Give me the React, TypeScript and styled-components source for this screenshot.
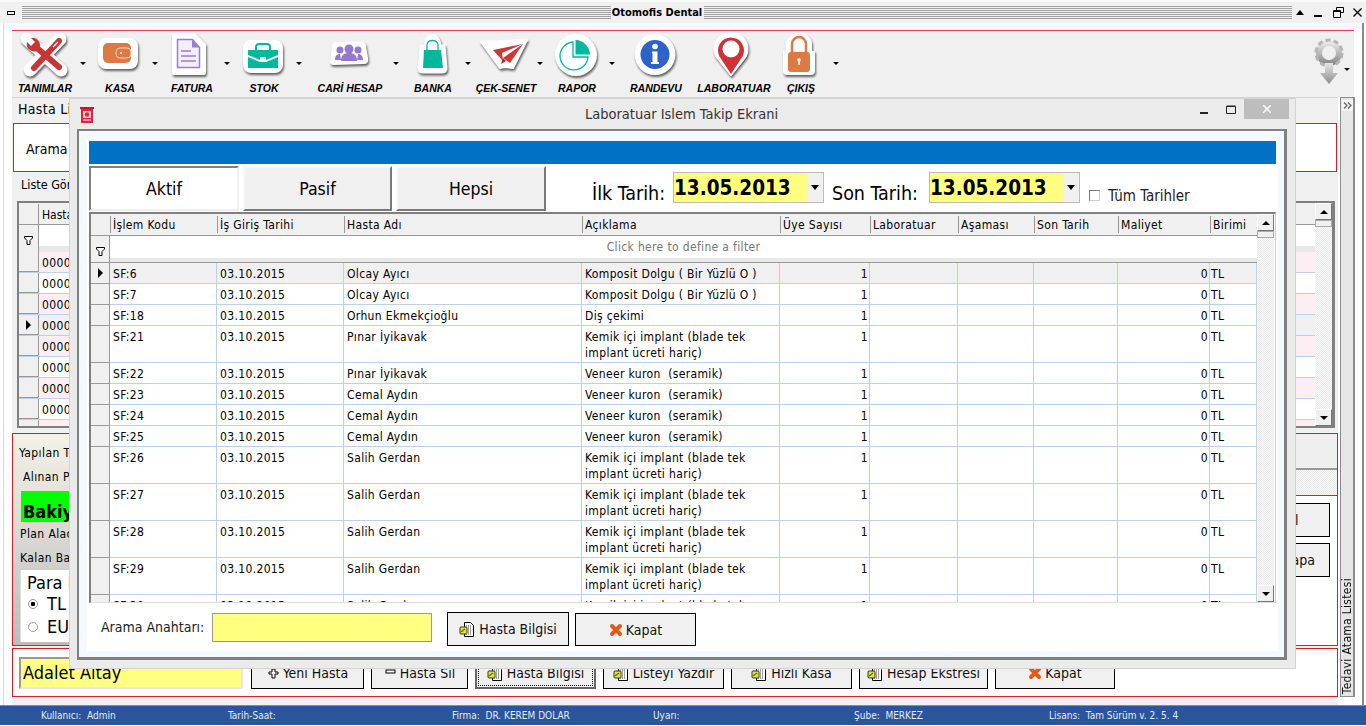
import React from 'react'
import styled, { createGlobalStyle } from 'styled-components'

const GlobalStyle = createGlobalStyle`
  html, body {
    margin: 0;
    padding: 0;
    background: #fff;
    overflow: hidden;
  }
  * {
    box-sizing: border-box;
  }
  body {
    font-family: "DejaVu Sans", "Noto Sans", sans-serif;
    font-stretch: condensed;
    font-size: 12px;
    color: #000;
  }
`

const GRID_COLS = '19px 107px 127px 238px 198px 90px 88px 76px 84px 92px 47px'
const CELL_LINE = '#b9d1ea'
const DITHER = 'repeating-conic-gradient(#e9e9e9 0% 25%, #fbfbfb 0% 50%) 0 0 / 2px 2px'

const Page = styled.div`
  position: relative;
  width: 1366px;
  height: 726px;
  display: flex;
  flex-direction: column;
  overflow: hidden;
  background: #fff;
`

/* ---------- app title bar ---------- */

const TitleBar = styled.div`
  height: 23px;
  display: flex;
  align-items: center;
  padding: 0 4px 0 7px;
  background: #f0f0f0;
  border-top: 2px solid #fafafa;
`

const SysMinimize = styled.div`
  width: 8px;
  height: 4px;
  border: 1px solid #000;
  margin-right: 7px;
`

const Grip = styled.div`
  flex: 1;
  height: 13px;
  background: repeating-linear-gradient(#a3a3a3 0 1px, #f0f0f0 1px 2px);
`

const AppTitle = styled.div`
  width: 93px;
  text-align: center;
  font-weight: 700;
  font-size: 11px;
`

const WinButtons = styled.div`
  width: 70px;
  display: flex;
  align-items: center;
  justify-content: space-between;
  padding-left: 4px;
`

/* ---------- main window ---------- */

const Shell = styled.div`
  height: 682px;
  width: 1361px;
  margin-left: 3px;
  padding: 7px 0 0 8px;
  border-left: 1px solid #d8d8d8;
  border-right: 2px solid #8a8a8a;
  background: linear-gradient(#f5f9ff 0 7px, #fff 7px);
`

const Ribbon = styled.div`
  width: 1342px;
  height: 67px;
  display: flex;
  background: #f0f0f0;
  border-top: 1px solid #ee3a5e;
`

const RibbonItem = styled.div<{ $w: number }>`
  width: ${p => p.$w}px;
  display: flex;
  flex-direction: column;
  align-items: center;
`

const RibbonIcon = styled.svg`
  width: 50px;
  height: 50px;
  flex: none;
  overflow: visible;
  filter: drop-shadow(1.5px 2px 1px rgba(0, 0, 0, 0.6));
`

const RibbonLabel = styled.div`
  height: 14px;
  white-space: nowrap;
  font-family: "Liberation Sans", Arial, sans-serif;
  font-stretch: normal;
  font-weight: 700;
  font-style: italic;
  font-size: 10.5px;
  line-height: 14px;
`

const RibbonCaret = styled.div<{ $shift: number }>`
  width: 10px;
  flex: none;
  margin-left: ${p => p.$shift}px;
  padding: 31px 0 0 2px;
  &::before {
    content: '';
    display: block;
    width: 0;
    height: 0;
    border: 3px solid transparent;
    border-top: 3px solid #000;
    border-bottom: 0;
  }
`

const GearSlot = styled.div`
  margin-left: auto;
  display: flex;
  padding: 6px 2px 0 0;
`

const GearIcon = styled.svg`
  width: 32px;
  height: 50px;
`

const Workspace = styled.div`
  display: flex;
  height: 608px;
  gap: 2px;
`

const MainColumn = styled.div`
  width: 1326px;
  height: 100%;
  display: flex;
  flex-direction: column;
  background: #f0f0f0;
`

const Strip = styled.div`
  width: 15px;
  height: 600px;
  border: 1px solid #8c8c8c;
  border-right-width: 2px;
  background: #e6e6e6;
  display: flex;
  flex-direction: column;
  justify-content: space-between;
  align-items: center;
`

const StripToggle = styled.div`
  width: 11px;
  height: 11px;
  margin-top: 2px;
  display: flex;
  align-items: center;
  justify-content: center;
  background: #f4f4f4;
`

const StripText = styled.div`
  writing-mode: vertical-rl;
  transform: rotate(180deg);
  font-size: 12px;
  letter-spacing: 0.3px;
  line-height: 12px;
  margin-bottom: 2px;
  white-space: nowrap;
  color: #111;
`

const TabTitle = styled.div`
  height: 26px;
  padding: 1px 0 0 6px;
  font-size: 14px;
  letter-spacing: 0.3px;
  line-height: 20px;
  border-top: 1px solid #d4d4d4;
`

const SearchBox = styled.div`
  height: 49px;
  margin-left: 1px;
  width: 1324px;
  border: 1px solid #e21c1c;
  background: #fff;
  padding-left: 12px;
  font-size: 14px;
  line-height: 50px;
`

const ListPanel = styled.div`
  height: 261px;
  padding-left: 5px;
`

const ListCaption = styled.div`
  height: 29px;
  padding: 5px 0 0 4px;
  font-size: 12.5px;
  line-height: 16px;
`

const ListGrid = styled.div`
  width: 1318px;
  height: 227px;
  display: flex;
  border: 2px solid #808080;
  border-right-width: 3px;
  background: #fff;
  overflow: hidden;
`

const ListBody = styled.div`
  flex: 1;
  overflow: hidden;
`

const ListHead = styled.div`
  height: 22px;
  display: flex;
  background: #f0f0f0;
  border-bottom: 1px solid #999;
  padding: 1px 0 0 19px;
  line-height: 22px;
  span {
    padding-left: 3px;
    border-left: 1px solid #999;
  }
`

const ListFilter = styled.div`
  height: 27px;
  display: flex;
  background: linear-gradient(#fff 0 21px, #e8e8e8 21px);
`

const ListRow = styled.div<{ $tone: 'pink' | 'white' | 'gray' }>`
  height: 21px;
  display: flex;
  line-height: 22px;
  border-bottom: 1px solid ${CELL_LINE};
  background: ${p => (p.$tone === 'pink' ? '#fdeef4' : p.$tone === 'gray' ? '#f0f0f0' : '#fff')};
`

const Indicator = styled.div<{ $w?: number; $open?: boolean }>`
  width: ${p => p.$w ?? 20}px;
  flex: none;
  display: flex;
  align-items: center;
  justify-content: center;
  background: #f0f0f0;
  border-right: 1px solid #999;
  ${p => (p.$open ? 'padding-top: 4px;' : 'border-bottom: 1px solid #999;')}
`

const RowMark = styled.div`
  width: 0;
  height: 0;
  border-left: 5px solid #000;
  border-top: 5px solid transparent;
  border-bottom: 5px solid transparent;
`

const ListCode = styled.div`
  padding-left: 3px;
  letter-spacing: 0.35px;
`

const Scrollbar = styled.div<{ $w: number }>`
  width: ${p => p.$w}px;
  flex: none;
  display: flex;
  flex-direction: column;
  background: ${DITHER};
`

const ScrollButton = styled.div<{ $down?: boolean }>`
  height: 17px;
  display: flex;
  align-items: center;
  justify-content: center;
  background: #f0f0f0;
  border: 1px solid #fff;
  border-right: 1px solid #777;
  border-bottom: 1px solid #777;
  ${p => p.$down && 'margin-top: auto;'}
  &::before {
    content: '';
    width: 0;
    height: 0;
    border-left: 4px solid transparent;
    border-right: 4px solid transparent;
    ${p => (p.$down ? 'border-top: 4px solid #000;' : 'border-bottom: 4px solid #000;')}
  }
`

const ScrollThumb = styled.div`
  height: 7px;
  background: #f0f0f0;
  border: 1px solid #aaa;
`

/* ---------- lower panels of the main window ---------- */

const LowerPanel = styled.div`
  height: 213px;
  width: 1326px;
  display: flex;
  justify-content: space-between;
  border: 1px solid #e21c1c;
  background: #f0f0f0;
`

const Summary = styled.div`
  width: 300px;
  padding: 7px 0 0 6px;
  background: linear-gradient(#f4f2e6, #bcbcbc);
`

const SummaryLine = styled.div<{ $indent?: number }>`
  height: 24px;
  padding-left: ${p => p.$indent ?? 0}px;
  font-size: 12px;
  letter-spacing: 0.4px;
  line-height: 25px;
  white-space: nowrap;
`

const BalanceBox = styled.div`
  width: 48px;
  height: 31px;
  margin: 2px 0 0 2px;
  overflow: hidden;
  background: #00ff00;
  font-size: 18px;
  font-weight: 700;
  line-height: 41px;
  padding-left: 2px;
`

const CurrencyGroup = styled.div`
  width: 300px;
  height: 72px;
  margin-left: 1px;
  padding: 3px 0 0 6px;
  background: #fff;
  font-size: 18px;
  border-left: 1px solid #ddd;
`

const CurrencyTitle = styled.div`
  height: 19px;
  line-height: 19px;
`

const CurrencyLine = styled.div`
  height: 23px;
  display: flex;
  align-items: center;
  gap: 9px;
  padding-left: 1px;
  line-height: 23px;
`

const Radio = styled.div<{ $on?: boolean }>`
  width: 10px;
  height: 10px;
  border-radius: 50%;
  border: 1px solid #999;
  background: ${p => (p.$on ? 'radial-gradient(#000 0 2px, #fff 2.5px)' : '#fff')};
`

const SidePane = styled.div`
  width: 300px;
  display: flex;
  flex-direction: column;
`

const SideHead = styled.div`
  height: 36px;
  background: #efefef;
  border-bottom: 2px solid #999;
`

const SideTexture = styled.div`
  height: 25px;
  background: ${DITHER};
`

const SideBox = styled.div`
  flex: 1;
  background: #fff;
  border-top: 1px solid #e21c1c;
  padding: 7px 7px 0 0;
  display: flex;
  flex-direction: column;
  align-items: flex-end;
  gap: 6px;
`

const PlainButton = styled.button<{ $w: number; $h?: number; $top?: number; $focused?: boolean }>`
  width: ${p => p.$w}px;
  height: ${p => p.$h ?? 34}px;
  margin-top: ${p => p.$top ?? 0}px;
  flex: none;
  display: flex;
  align-items: center;
  justify-content: center;
  gap: 3px;
  padding: 0;
  font: inherit;
  font-size: 14px;
  color: #111;
  background: #f0f0f0;
  border: ${p => (p.$focused ? '2px solid #666' : '1px solid #000')};
  ${p => p.$focused && 'outline: 1px dotted #000; outline-offset: -4px;'}
`

const BottomBox = styled.div`
  height: 49px;
  width: 1326px;
  margin-top: 2px;
  display: flex;
  align-items: flex-start;
  padding: 8px 0 0 6px;
  gap: 7px;
  border: 1px solid #e21c1c;
  background: #fff;
`

const NameField = styled.div`
  width: 224px;
  height: 32px;
  margin-right: 1px;
  padding-left: 2px;
  background: #ffff80;
  border: 2px solid #e8e8e8;
  border-top-color: #999;
  border-left-color: #999;
  font-size: 18px;
  line-height: 27px;
`

const StatusBar = styled.div`
  height: 20px;
  display: flex;
  align-items: center;
  padding-left: 41px;
  background: #2a559b;
  color: #e4ebf6;
  font-size: 10px;
  border-top: 1px solid #8b8b8b;
`

const StatusItem = styled.div<{ $w: number }>`
  width: ${p => p.$w}px;
  white-space: pre;
`

/* ---------- dialog window ---------- */

const Dialog = styled.div`
  position: absolute;
  left: 69px;
  top: 98px;
  width: 1227px;
  height: 571px;
  display: flex;
  flex-direction: column;
  background: #ebebeb;
  border: 1px solid #d4d4d4;
`

const DialogBar = styled.div`
  height: 30px;
  flex: none;
  position: relative;
  display: flex;
  align-items: center;
  padding-left: 10px;
`

const DialogTitle = styled.div`
  flex: 1;
  text-align: center;
  font-size: 14.5px;
  color: #333;
  padding-right: 26px;
  line-height: 30px;
`

const DialogControls = styled.div`
  position: absolute;
  top: 0;
  right: 6px;
  height: 20px;
  display: flex;
  align-items: stretch;
`

const DialogControl = styled.div<{ $w: number; $close?: boolean }>`
  width: ${p => p.$w}px;
  display: flex;
  align-items: center;
  justify-content: center;
  background: ${p => (p.$close ? '#bdbdbd' : 'transparent')};
`

const ClientFrame = styled.div`
  margin: 0 8px 8px 7px;
  height: 532px;
  border: 3px solid #808080;
  border-top-width: 2px;
  border-left-width: 2px;
  padding: 10px 6px 6px 8px;
  background: #f4f8ff;
`

const ClientBody = styled.div`
  height: 100%;
  display: flex;
  flex-direction: column;
  padding-left: 2px;
  background: #fff;
`

const BlueBar = styled.div`
  width: 1187px;
  height: 23px;
  flex: none;
  background: #0071c4;
`

const FilterRow = styled.div`
  height: 48px;
  flex: none;
  display: flex;
  align-items: flex-start;
  padding-top: 2px;
`

const StateTab = styled.div<{ $active?: boolean; $w: number }>`
  width: ${p => p.$w}px;
  height: 45px;
  margin-right: 4px;
  text-align: center;
  font-size: 17.5px;
  line-height: 43px;
  background: ${p => (p.$active ? '#fff' : '#f0f0f0')};
  border: 2px solid;
  border-color: ${p =>
    p.$active ? '#808080 #efefef #efefef #808080' : '#f8f8f8 #7a7a7a #7a7a7a #f8f8f8'};
`

const DateLabel = styled.div<{ $left: number; $w: number }>`
  margin: 15px 0 0 ${p => p.$left}px;
  width: ${p => p.$w}px;
  white-space: nowrap;
  font-size: 19.5px;
  line-height: 26px;
`

const DateCombo = styled.div`
  width: 151px;
  height: 31px;
  margin-top: 6px;
  display: flex;
  background: #ffff80;
  border: 1px solid #bbb;
  font-size: 20.5px;
  font-weight: 700;
  line-height: 31px;
`

const DateText = styled.div`
  flex: 1;
`

const ComboDrop = styled.div`
  width: 16px;
  display: flex;
  align-items: center;
  justify-content: center;
  background: #f0f0f0;
  &::before {
    content: '';
    width: 0;
    height: 0;
    border-left: 4px solid transparent;
    border-right: 4px solid transparent;
    border-top: 5px solid #000;
  }
`

const CheckBox = styled.div`
  width: 11px;
  height: 11px;
  margin: 24px 0 0 9px;
  background: #fff;
  border: 1px solid #777;
  border-right-color: #ccc;
  border-bottom-color: #ccc;
`

const CheckLabel = styled.div`
  margin: 21px 0 0 8px;
  font-size: 15px;
  line-height: 18px;
  color: #222;
`

const Grid = styled.div`
  width: 1187px;
  height: 391px;
  flex: none;
  display: flex;
  border-top: 2px solid #808080;
  border-left: 2px solid #808080;
  border-right: 1px solid #ccc;
  border-bottom: 1px solid #ddd;
  overflow: hidden;
  letter-spacing: 0.35px;
`

const GridBody = styled.div`
  width: 1166px;
  flex: none;
`

const HeadRow = styled.div`
  height: 22px;
  display: grid;
  grid-template-columns: ${GRID_COLS};
  background: #f0f0f0;
  border-bottom: 1px solid #999;
`

const HeadCell = styled.div`
  padding-left: 2px;
  border-left: 1px solid #999;
  margin: 2px 0;
  line-height: 18px;
  white-space: nowrap;
  overflow: hidden;
`

const FilterGridRow = styled.div`
  height: 27px;
  display: flex;
  background: linear-gradient(#fff 0 22px, #e9e9e9 22px);
  border-bottom: 1px solid #999;
`

const FilterHint = styled.div`
  flex: 1;
  text-align: center;
  color: #777;
  line-height: 22px;
`

const DataRow = styled.div<{ $tall?: boolean; $current?: boolean }>`
  height: ${p => (p.$tall ? 37 : 21)}px;
  display: grid;
  grid-template-columns: ${GRID_COLS};
  background: ${p => (p.$current ? '#f0f0f0' : '#fff')};
`

const DataCell = styled.div<{ $right?: boolean; $pad?: number }>`
  padding: 3px 1px 0 ${p => p.$pad ?? 3}px;
  line-height: 16px;
  white-space: pre-wrap;
  overflow: hidden;
  border-right: 1px solid ${CELL_LINE};
  border-bottom: 1px solid ${CELL_LINE};
  ${p => p.$right && 'text-align: right;'}
`

const SearchRow = styled.div`
  flex: 1;
  display: flex;
  align-items: flex-start;
  padding: 9px 0 0 12px;
`

const SearchLabel = styled.div`
  width: 111px;
  margin-top: 5px;
  font-size: 14px;
  line-height: 20px;
  color: #222;
`

const SearchField = styled.div`
  width: 220px;
  height: 29px;
  margin: 1px 15px 0 0;
  background: #ffff80;
  border: 1px solid #999;
`

const KapatGap = styled.div`
  width: 6px;
  flex: none;
`

/* ---------- drawings ---------- */

const DocGlyph = () => (
  <svg width="17" height="17" viewBox="0 0 17 17">
    <path d="M5.500 1.500h6l3 3v11h-9z" fill="#fff" stroke="#000" />
    <path d="M7 5h5M7 7h6M7 9h6M7 11h6M7 13h6" stroke="#444" strokeDasharray="1 1" />
    <rect x="1" y="6" width="7" height="7" rx="1" fill="#f3e21e" stroke="#333" />
    <path d="M2 11l4-3" stroke="#0a8a8a" strokeWidth="1.500" />
  </svg>
)

const CloseGlyph = () => (
  <svg width="14" height="14" viewBox="0 0 14 14">
    <path d="M3 3l8 8M11 3l-8 8" stroke="#e2591c" strokeWidth="4" strokeLinecap="round" />
  </svg>
)

const PlusGlyph = () => (
  <svg width="13" height="11" viewBox="0 0 13 11">
    <path d="M5 1h3v3h3v2H8v4H5V6H2V4h3z" fill="#fff" stroke="#000" />
  </svg>
)

const MinusGlyph = () => (
  <svg width="13" height="11" viewBox="0 0 13 11">
    <rect x="2" y="2" width="9" height="3" fill="#fff" stroke="#000" />
  </svg>
)

const Funnel = () => (
  <svg width="9" height="9" viewBox="0 0 9 9">
    <path d="M.5.5h8v1.500L6 4.500v4H3v-4L.5 2z" fill="#fff" stroke="#000" />
  </svg>
)

const DialogGlyph = () => (
  <svg width="14" height="17" viewBox="0 0 14 17">
    <path d="M1 3h12v14H1z" fill="#e0243c" />
    <path d="M0 1h14v2H0z" fill="#c01830" />
    <rect x="3" y="5" width="8" height="7" fill="#f8c8d0" />
    <circle cx="7" cy="8.500" r="2.200" fill="#e0243c" />
    <path d="M3 14h8" stroke="#fff" />
  </svg>
)

const WHITE = '#fff'

const icons: Record<string, React.ReactNode> = {
  tanimlar: (
    <>
      <path d="M6 6L40 37M39 6L9 37" stroke={WHITE} strokeWidth="13" strokeLinecap="round" />
      <path d="M38 8L13 35" stroke="#c93434" strokeWidth="6" strokeLinecap="round" />
      <path d="M16 15L38 34" stroke="#c93434" strokeWidth="6" strokeLinecap="round" />
      <path d="M6 9a7.500 7.500 0 0 0 10 9l3-5a7.500 7.500 0 0 0-9-8l4 4-4 4z" fill="#c93434" />
      <path d="M37 9l-5 5" stroke={WHITE} strokeWidth="1.200" />
    </>
  ),
  kasa: (
    <>
      <rect x="2" y="5" width="40" height="31" rx="8" fill={WHITE} />
      <rect x="7" y="10" width="28" height="20" rx="5" fill="#dc7b41" />
      <rect x="20" y="15" width="15" height="10" rx="4" fill="none" stroke="#f5d2bb" />
      <circle cx="25" cy="20" r="1" fill="#fff" />
    </>
  ),
  fatura: (
    <>
      <path d="M6 2h20l10 10v28H6z" fill={WHITE} stroke={WHITE} strokeWidth="4" strokeLinejoin="round" />
      <path d="M9.500 6.500h15l7 8v20h-22z" fill="#f2eefa" stroke="#9a7fd1" strokeWidth="1.500" />
      <path d="M24 6.500v8h7.500" fill="#9a7fd1" />
      <path d="M13 18h10M13 23h15M13 28h15" stroke="#9a7fd1" strokeWidth="1.500" />
    </>
  ),
  stok: (
    <>
      <rect x="3" y="7" width="40" height="33" rx="8" fill={WHITE} />
      <path d="M16 17v-3a3 3 0 0 1 3-3h8a3 3 0 0 1 3 3v3" fill="none" stroke="#00b89c" strokeWidth="2" />
      <path d="M8 17h30v5L26 27h-6L8 22z" fill="#00b89c" />
      <path d="M8 24l12 5h6l12-5v11H8z" fill="#00b89c" />
      <rect x="20" y="24" width="6" height="3" fill="#fff" />
    </>
  ),
  cari: (
    <>
      <path d="M6 12q1-3 5-3h24q5 0 5 4l2 12q1 6-4 6l-30 1q-4 0-4-3z" fill={WHITE} />
      <circle cx="23" cy="16" r="4.500" fill="#9478cf" />
      <path d="M15 28c0-6 3-8 8-8s8 2 8 8z" fill="#9478cf" />
      <circle cx="14" cy="17" r="3.500" fill="#9478cf" />
      <circle cx="32" cy="17" r="3.500" fill="#9478cf" />
      <path d="M9 27c0-4 2-6 5-6l1 6zM37 27c0-4-2-6-5-6l-1 6z" fill="#9478cf" />
    </>
  ),
  banka: (
    <>
      <path d="M12 13h23l2 22q0 4-4 4H14q-4 0-4-4z" fill={WHITE} stroke={WHITE} strokeWidth="3" />
      <path d="M17 13c0-12 13-12 13 0v3H17z" fill={WHITE} stroke={WHITE} strokeWidth="5" />
      <path d="M15 17h17l2 18H14z" fill="#00b89c" />
      <path d="M18 21v-9c0-6 11-6 11 0v9" fill="none" stroke="#00b89c" strokeWidth="1.300" />
    </>
  ),
  cek: (
    <>
      <path d="M-1 9l46-2-14 28-8-1-5 1-6-8z" fill={WHITE} stroke={WHITE} strokeWidth="2" strokeLinejoin="round" />
      <path d="M11 17l30-6-21 9 1 8z" fill="#cf3636" />
      <path d="M41 11L28 30l-7-5z" fill="#cf3636" />
      <path d="M21 25l-2 6 5-3z" fill="#a92828" />
    </>
  ),
  rapor: (
    <>
      <circle cx="23" cy="22" r="21" fill={WHITE} />
      <path d="M20 9a14 14 0 1 0 15 15H20z" fill="none" stroke="#00b89c" strokeWidth="1.300" />
      <path d="M22.500 7a15 15 0 0 1 14.500 14.500H22.500z" fill="#00b89c" />
    </>
  ),
  randevu: (
    <>
      <circle cx="23" cy="21.500" r="20.500" fill={WHITE} />
      <circle cx="23" cy="21.500" r="14.500" fill="#2f62c9" />
      <circle cx="23" cy="13.500" r="2.800" fill="#fff" />
      <path d="M20 18.500h5.500V29H27v2h-8v-2h1.500v-8.500H20z" fill="#fff" />
    </>
  ),
  lab: (
    <>
      <path d="M21 43L6 24a17 17 0 1 1 30 0z" fill={WHITE} stroke={WHITE} strokeWidth="1" />
      <path d="M21 41L9.500 23.500a13 13 0 1 1 23 0z" fill="#cb3434" />
      <circle cx="21" cy="16" r="8.500" fill="#fff" />
    </>
  ),
  cikis: (
    <>
      <path d="M9 18v-7a13 11 0 0 1 26 0v7h3v20q0 4-4 4H10q-4 0-4-4V18z" fill={WHITE} />
      <path d="M15 20v-9a7 7 0 0 1 14 0v9" fill="none" stroke="#dc7b41" strokeWidth="2.500" />
      <rect x="11" y="19" width="22" height="20" rx="3" fill="#dc7b41" />
      <circle cx="22" cy="27" r="1.800" fill="#fff" />
      <rect x="21.300" y="27" width="1.500" height="5" fill="#fff" />
    </>
  ),
}

const ribbon = [
  { key: 'tanimlar', label: 'TANIMLAR', w: 66, shift: 0 },
  { key: 'kasa', label: 'KASA', w: 64, shift: -2 },
  { key: 'fatura', label: 'FATURA', w: 64, shift: -2 },
  { key: 'stok', label: 'STOK', w: 64, shift: -2 },
  { key: 'cari', label: 'CARİ HESAP', w: 92, shift: -5 },
  { key: 'banka', label: 'BANKA', w: 64, shift: -2 },
  { key: 'cek', label: 'ÇEK-SENET', w: 66, shift: -4 },
  { key: 'rapor', label: 'RAPOR', w: 64, shift: -2 },
  { key: 'randevu', label: 'RANDEVU', w: 78 },
  { key: 'lab', label: 'LABORATUAR', w: 78 },
  { key: 'cikis', label: 'ÇIKIŞ', w: 56, shift: 2 },
]

const headers = [
  'İşlem Kodu',
  'İş Giriş Tarihi',
  'Hasta Adı',
  'Açıklama',
  'Üye Sayısı',
  'Laboratuar',
  'Aşaması',
  'Son Tarih',
  'Maliyet',
  'Birimi',
]

const IMPLANT = 'Kemik içi implant (blade tek\nimplant ücreti hariç)'
const VENEER = 'Veneer kuron  (seramik)'
const DOLGU = 'Komposit Dolgu ( Bir Yüzlü O )'

const rows = [
  { code: 'SF:6', name: 'Olcay Ayıcı', note: DOLGU },
  { code: 'SF:7', name: 'Olcay Ayıcı', note: DOLGU },
  { code: 'SF:18', name: 'Orhun Ekmekçioğlu', note: 'Diş çekimi' },
  { code: 'SF:21', name: 'Pınar İyikavak', note: IMPLANT },
  { code: 'SF:22', name: 'Pınar İyikavak', note: VENEER },
  { code: 'SF:23', name: 'Cemal Aydın', note: VENEER },
  { code: 'SF:24', name: 'Cemal Aydın', note: VENEER },
  { code: 'SF:25', name: 'Cemal Aydın', note: VENEER },
  { code: 'SF:26', name: 'Salih Gerdan', note: IMPLANT },
  { code: 'SF:27', name: 'Salih Gerdan', note: IMPLANT },
  { code: 'SF:28', name: 'Salih Gerdan', note: IMPLANT },
  { code: 'SF:29', name: 'Salih Gerdan', note: IMPLANT },
  { code: 'SF:30', name: 'Salih Gerdan', note: IMPLANT },
]

const listRows = Array.from({ length: 9 }, (_, i) => i)

const bottomButtons = [
  { label: 'Hasta Sil', w: 97, glyph: <MinusGlyph /> },
  { label: 'Hasta Bilgisi', w: 121, glyph: <DocGlyph />, focused: true },
  { label: 'Listeyi Yazdır', w: 121, glyph: <DocGlyph /> },
  { label: 'Hızlı Kasa', w: 121, glyph: <DocGlyph /> },
  { label: 'Hesap Ekstresi', w: 129, glyph: <DocGlyph /> },
  { label: 'Kapat', w: 120, glyph: <CloseGlyph /> },
]

export default function App() {
  return (
    <Page>
      <GlobalStyle />
      <TitleBar>
        <SysMinimize />
        <Grip />
        <AppTitle>Otomofis Dental</AppTitle>
        <Grip />
        <WinButtons>
          <svg width="9" height="6" viewBox="0 0 9 6"><path d="M0 5h8L4 0z" /></svg>
          <svg width="9" height="10" viewBox="0 0 9 10"><path d="M0 7h8v2H0z" /></svg>
          <svg width="11" height="11" viewBox="0 0 11 11" fill="none" stroke="#000">
            <path d="M3.500 3V.5h7v5H8M.5 3.500h7v7h-7zM.5 4.500h7" />
          </svg>
          <svg width="9" height="9" viewBox="0 0 9 9" stroke="#000" strokeWidth="1.300"><path d="M.5.5l8 8M8.500.5l-8 8" /></svg>
        </WinButtons>
      </TitleBar>

      <Shell>
        <Ribbon>
          {ribbon.map(item => (
            <React.Fragment key={item.key}>
              <RibbonItem $w={item.w}>
                <RibbonIcon viewBox="-1 -2 50 50">{icons[item.key]}</RibbonIcon>
                <RibbonLabel>{item.label}</RibbonLabel>
              </RibbonItem>
              {item.shift !== undefined && <RibbonCaret $shift={item.shift} />}
            </React.Fragment>
          ))}
          <GearSlot>
            <GearIcon viewBox="0 0 32 50">
              <defs>
                <linearGradient id="gearFill" x1="0" y1="0" x2="0" y2="1">
                  <stop offset="0" stopColor="#e6e6e6" />
                  <stop offset="1" stopColor="#8c8c8c" />
                </linearGradient>
              </defs>
              <circle cx="15" cy="16" r="10" fill="none" stroke="url(#gearFill)" strokeWidth="6" />
              <circle cx="15" cy="16" r="13" fill="none" stroke="#b5b5b5" strokeWidth="3" strokeDasharray="5 3.200" />
              <path d="M11 26h8v10h5l-9 11-9-11h5z" fill="url(#gearFill)" />
            </GearIcon>
            <RibbonCaret $shift={-4} />
          </GearSlot>
        </Ribbon>

        <Workspace>
          <MainColumn>
            <TabTitle>Hasta Listesi</TabTitle>
            <SearchBox>Arama Anahtarı</SearchBox>
            <ListPanel>
              <ListCaption>Liste Görünümü</ListCaption>
              <ListGrid>
                <ListBody>
                  <ListHead>
                    <span>Hasta Kodu</span>
                  </ListHead>
                  <ListFilter>
                    <Indicator $open><Funnel /></Indicator>
                  </ListFilter>
                  {listRows.map(i => (
                    <ListRow key={i} $tone={i === 3 ? 'gray' : i % 2 === 0 ? 'pink' : 'white'}>
                      <Indicator>{i === 3 && <RowMark />}</Indicator>
                      <ListCode>{`00000${i + 1}`}</ListCode>
                    </ListRow>
                  ))}
                </ListBody>
                <Scrollbar $w={17}>
                  <ScrollButton />
                  <ScrollThumb />
                  <ScrollButton $down />
                </Scrollbar>
              </ListGrid>
            </ListPanel>
            <LowerPanel>
              <Summary>
                <SummaryLine>Yapılan Tedavi</SummaryLine>
                <SummaryLine $indent={4}>Alınan Para</SummaryLine>
                <BalanceBox>Bakiye</BalanceBox>
                <SummaryLine $indent={1}>Plan Alacak</SummaryLine>
                <SummaryLine $indent={1}>Kalan Bakiye</SummaryLine>
                <CurrencyGroup>
                  <CurrencyTitle>Para Birimi</CurrencyTitle>
                  <CurrencyLine><Radio $on />TL</CurrencyLine>
                  <CurrencyLine><Radio />EURO</CurrencyLine>
                </CurrencyGroup>
              </Summary>
              <SidePane>
                <SideHead />
                <SideTexture />
                <SideBox>
                  <PlainButton $w={120}>Detay Bil</PlainButton>
                  <PlainButton $w={120}>Hesabını Kapa</PlainButton>
                </SideBox>
              </SidePane>
            </LowerPanel>
            <BottomBox>
              <NameField>Adalet Altay</NameField>
              <PlainButton $w={113} $h={32}><PlusGlyph /> Yeni Hasta</PlainButton>
              {bottomButtons.map(b => (
                <PlainButton key={b.label} $w={b.w} $h={32} $focused={b.focused}>
                  {b.glyph} {b.label}
                </PlainButton>
              ))}
            </BottomBox>
          </MainColumn>
          <Strip>
            <StripToggle>
              <svg width="9" height="7" viewBox="0 0 9 7" fill="none" stroke="#666" strokeWidth="1.300">
                <path d="M1 .5l3 3-3 3M5 .5l3 3-3 3" />
              </svg>
            </StripToggle>
            <StripText>Tedavi Atama Listesi</StripText>
          </Strip>
        </Workspace>
      </Shell>

      <StatusBar>
        <StatusItem $w={187}>Kullanıcı:  Admin</StatusItem>
        <StatusItem $w={224}>Tarih-Saat:</StatusItem>
        <StatusItem $w={201}>Firma:  DR. KEREM DOLAR</StatusItem>
        <StatusItem $w={201}>Uyarı:</StatusItem>
        <StatusItem $w={195}>Şube:  MERKEZ</StatusItem>
        <StatusItem $w={200}>Lisans:  Tam Sürüm v. 2. 5. 4</StatusItem>
      </StatusBar>

      <Dialog>
        <DialogBar>
          <DialogGlyph />
          <DialogTitle>Laboratuar Islem Takip Ekrani</DialogTitle>
          <DialogControls>
            <DialogControl $w={28}>
              <svg width="9" height="9" viewBox="0 0 9 9"><path d="M0 7h8v2H0z" fill="#222" /></svg>
            </DialogControl>
            <DialogControl $w={26}>
              <svg width="10" height="9" viewBox="0 0 10 9" fill="none" stroke="#222"><path d="M.5 1.500h9v7h-9zM.5 1h9" /></svg>
            </DialogControl>
            <DialogControl $w={45} $close>
              <svg width="8" height="8" viewBox="0 0 8 8" stroke="#fff" strokeWidth="1.400"><path d="M0 0l8 8M8 0L0 8" /></svg>
            </DialogControl>
          </DialogControls>
        </DialogBar>
        <ClientFrame>
          <ClientBody>
            <BlueBar />
            <FilterRow>
              <StateTab $active $w={150}>Aktif</StateTab>
              <StateTab $w={149}>Pasif</StateTab>
              <StateTab $w={150}>Hepsi</StateTab>
              <DateLabel $left={42} $w={81}>İlk Tarih:</DateLabel>
              <DateCombo>
                <DateText>13.05.2013</DateText>
                <ComboDrop />
              </DateCombo>
              <DateLabel $left={8} $w={97}>Son Tarih:</DateLabel>
              <DateCombo>
                <DateText>13.05.2013</DateText>
                <ComboDrop />
              </DateCombo>
              <CheckBox />
              <CheckLabel>Tüm Tarihler</CheckLabel>
            </FilterRow>
            <Grid>
              <GridBody>
                <HeadRow>
                  <div />
                  {headers.map(h => <HeadCell key={h}>{h}</HeadCell>)}
                </HeadRow>
                <FilterGridRow>
                  <Indicator $w={19} $open><Funnel /></Indicator>
                  <FilterHint>Click here to define a filter</FilterHint>
                </FilterGridRow>
                {rows.map((r, i) => (
                  <DataRow key={r.code} $tall={r.note === IMPLANT} $current={i === 0}>
                    <Indicator $w={19}>{i === 0 && <RowMark />}</Indicator>
                    <DataCell>{r.code}</DataCell>
                    <DataCell>03.10.2015</DataCell>
                    <DataCell>{r.name}</DataCell>
                    <DataCell>{r.note}</DataCell>
                    <DataCell $right>1</DataCell>
                    <DataCell />
                    <DataCell />
                    <DataCell />
                    <DataCell $right>0</DataCell>
                    <DataCell $pad={1}>TL</DataCell>
                  </DataRow>
                ))}
              </GridBody>
              <Scrollbar $w={17}>
                <ScrollButton />
                <ScrollThumb />
                <ScrollButton $down />
              </Scrollbar>
            </Grid>
            <SearchRow>
              <SearchLabel>Arama Anahtarı:</SearchLabel>
              <SearchField />
              <PlainButton $w={122}><DocGlyph /> Hasta Bilgisi</PlainButton>
              <KapatGap />
              <PlainButton $w={121} $h={33} $top={1}><CloseGlyph /> Kapat</PlainButton>
            </SearchRow>
          </ClientBody>
        </ClientFrame>
      </Dialog>
    </Page>
  )
}
